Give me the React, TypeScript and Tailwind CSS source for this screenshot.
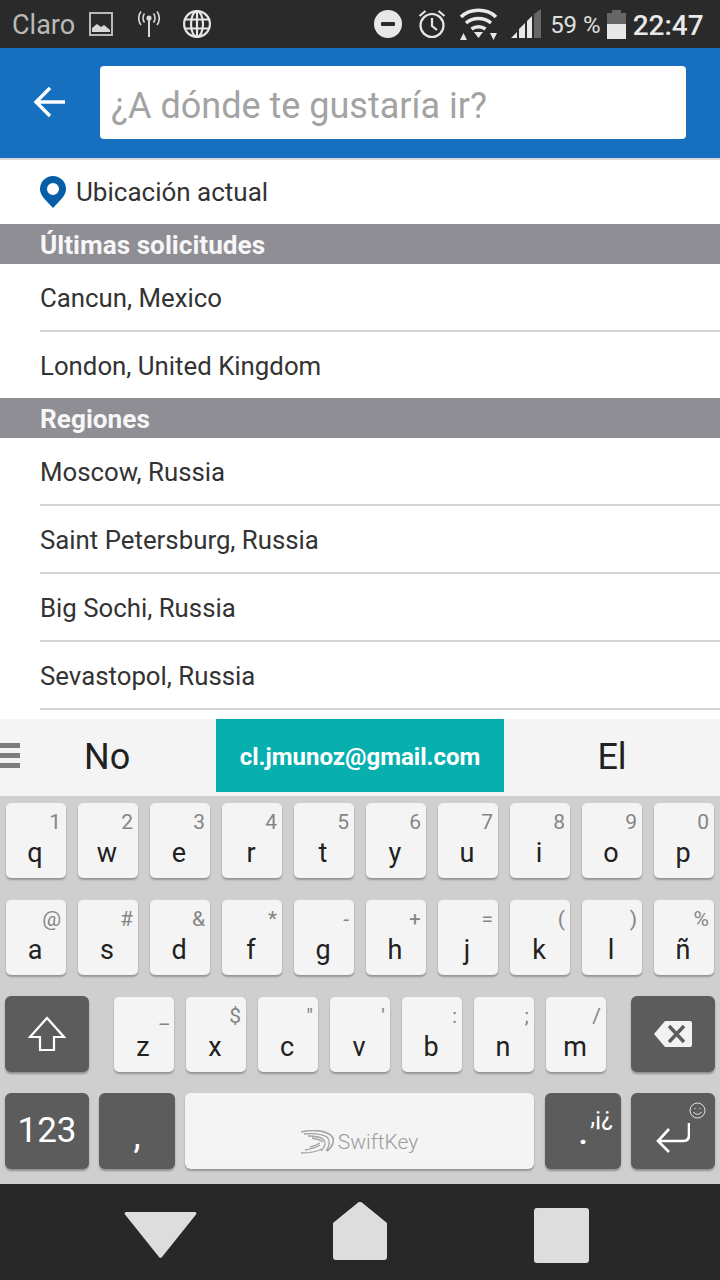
const font = { fontFamily: "Roboto, sans-serif" };

const TOP_ROW = [
  ["q", "1"], ["w", "2"], ["e", "3"], ["r", "4"], ["t", "5"],
  ["y", "6"], ["u", "7"], ["i", "8"], ["o", "9"], ["p", "0"],
];
const MIDDLE_ROW = [
  ["a", "@"], ["s", "#"], ["d", "&"], ["f", "*"], ["g", "-"],
  ["h", "+"], ["j", "="], ["k", "("], ["l", ")"], ["ñ", "%"],
];
const BOTTOM_ROW = [
  ["z", "_"], ["x", "$"], ["c", '"'], ["v", "'"], ["b", ":"], ["n", ";"], ["m", "/"],
];

function LetterKey({ label, hint }: { label: string; hint: string }) {
  return (
    <div className="relative flex h-[75px] w-[60px] shrink-0 items-end justify-center rounded-[5px] bg-[#f4f4f4] pb-[8px] pr-[2px] text-[27px] leading-[34px] text-[#212121] shadow-[0_2px_2px_rgba(0,0,0,0.28)]">
      {label}
      <span className="absolute right-[5px] top-[6px] text-[21px] leading-[26px] text-[#858585]">{hint}</span>
    </div>
  );
}

function DarkKey({ className, children }: { className: string; children: React.ReactNode }) {
  return (
    <div className={`relative flex h-[76px] shrink-0 items-center justify-center rounded-[6px] bg-[#5c5c5c] text-white shadow-[0_2px_2px_rgba(0,0,0,0.3)] ${className}`}>
      {children}
    </div>
  );
}

function Row({ label, last }: { label: string; last?: boolean }) {
  return (
    <div className="pl-[40px]">
      <div className={`flex items-center border-[#d6d6d6] pt-[3px] text-[25.800px] text-[#333333] ${last ? "h-[66px]" : "h-[68px] border-b-2"}`}>
        {label}
      </div>
    </div>
  );
}

function SectionHeader({ label }: { label: string }) {
  return (
    <div className="flex h-[40px] items-center bg-[#8f8e94] pl-[40px] pt-[3px] text-[26.200px] font-bold text-[#f7f7f7]">
      {label}
    </div>
  );
}

function StatusBar() {
  return (
    <div className="flex h-[48px] items-center bg-[#2a2a2a] text-[#e6e6e6]">
      <span className="ml-[12px] pt-[3px] text-[27px] text-[#b9b9b9]">Claro</span>
      <svg className="ml-[14px]" width="24" height="24" viewBox="0 0 24 24">
        <rect x="1" y="1" width="22" height="22" fill="none" stroke="#b9b9b9" strokeWidth="2" />
        <path d="M3 20v-4l5-4 4 3 3-2 6 5v2z" fill="#d8d8d8" />
      </svg>
      <svg className="ml-[25px]" width="22" height="28" viewBox="0 0 22 28" fill="none" stroke="#d8d8d8" strokeWidth="1.6">
        <circle cx="11" cy="8" r="2.6" fill="#d8d8d8" stroke="none" />
        <path d="M11 9v18" strokeWidth="2" />
        <path d="M6.5 3.5c-2 2.5-2 6.500 0 9M15.500 3.500c2 2.500 2 6.500 0 9M3 1.500c-3 4-3 9.500 0 13.500M19 1.500c3 4 3 9.500 0 13.500" />
      </svg>
      <svg className="ml-[23px]" width="28" height="28" viewBox="0 0 28 28" fill="none" stroke="#e6e6e6" strokeWidth="2.200">
        <circle cx="14" cy="14" r="12.900" />
        <ellipse cx="14" cy="14" rx="6" ry="12.900" />
        <path d="M14 1v26M2 9.500h24M2 18.500h24" />
      </svg>
      <svg className="ml-[163px]" width="28" height="28" viewBox="0 0 28 28">
        <circle cx="14" cy="14" r="14" fill="#e8e8e8" />
        <rect x="7" y="12" width="14" height="4" rx="1" fill="#2a2a2a" />
      </svg>
      <svg className="ml-[16px]" width="28" height="30" viewBox="0 0 28 30" fill="none" stroke="#e6e6e6" strokeWidth="2.200">
        <circle cx="14" cy="16.500" r="11.500" />
        <path d="M14 9v8l5 4M1.500 7l6-5M26.500 7l-6-5" />
      </svg>
      <svg className="ml-[13px]" width="39" height="34" viewBox="0 0 39 34" fill="none" stroke="#e8e8e8" strokeWidth="3.600">
        <path d="M2 10C11 1 28 1 37 10M7 16c7-6 18-6 25 0M12.500 22c4-3 10-3 14 0" />
        <path d="M15 25h9l-4.500 6zM1 33l3.500-7 3.500 7zM31 26h7l-3.500 7z" fill="#e8e8e8" stroke="none" />
      </svg>
      <svg className="ml-[13px]" width="31" height="30" viewBox="0 0 31 30">
        <path d="M0 29l6-6v6zM8 29v-9l6-6v15zM16 29V12l5-5v22z" fill="#e8e8e8" />
        <path d="M23 29V5l7-5v29z" fill="#666666" />
      </svg>
      <span className="ml-[8px] pt-[1px] text-[24px] text-[#e0e0e0]">59 %</span>
      <svg className="ml-[6px]" width="19" height="29" viewBox="0 0 19 29">
        <path d="M5 0h9v3h5v26H0V3h5z" fill="#666666" />
        <rect y="14" width="19" height="15" fill="#e8e8e8" />
      </svg>
      <span className="ml-[7px] pt-[3px] text-[28px] font-medium text-[#e8e8e8]">22:47</span>
    </div>
  );
}

function Header() {
  return (
    <div className="flex h-[112px] items-start border-b-2 border-[#d9d9d9] bg-[#1670bf]">
      <svg className="ml-[33px] mt-[38px]" width="33" height="32" viewBox="0 0 33 32" fill="none" stroke="white" strokeWidth="3.400">
        <path d="M32 16H3M17 2 3 16l14 14" />
      </svg>
      <div className="ml-[34px] mt-[18px] flex h-[73px] w-[586px] items-center rounded-[4px] bg-white pl-[11px] pt-[6px] text-[36px] text-[#a3a3a3]">
        ¿A dónde te gustaría ir?
      </div>
    </div>
  );
}

function SwiftKeyLogo() {
  return (
    <div className="flex items-center text-[21px] font-light text-[#9c9c9c]">
      <svg width="33" height="24" viewBox="0 0 33 24" fill="none" stroke="#a3a3a3" strokeWidth="1.300">
        <path d="M0 2c9-2 19-2 26 1 5 2 7 6 6 10-1 3-3 6-6 8" strokeWidth="1.600" />
        <path d="M3 4c9-1 18 0 23 3 3 3 3 8-1 14" />
        <path d="M7 6c7 0 13 1 16 4 2 3 1 7-3 11" />
        <path d="M11 8c5 1 9 2 11 4" />
        <path d="M0 23c8 0 15-1 21-4M4 20c6-1 11-2 15-5M9 17c4-1 7-2 10-4" />
      </svg>
      <span className="ml-[4px]">SwiftKey</span>
    </div>
  );
}

function Keyboard() {
  return (
    <div className="bg-[#cfcfcf]">
      <div className="flex h-[77px] items-start bg-[#f4f4f4]">
        <div className="flex h-[73px] w-[216px] items-center">
          <div className="flex w-[20px] flex-col gap-[5px]">
            <div className="h-[5px] bg-[#7d7d7d]" />
            <div className="h-[5px] bg-[#7d7d7d]" />
            <div className="h-[5px] bg-[#7d7d7d]" />
          </div>
          <span className="ml-[64px] pt-[3px] text-[36px] text-[#212121]">No</span>
        </div>
        <div className="flex h-[73px] w-[288px] items-center justify-center bg-[#08afaf] pt-[3px] text-[24px] font-bold text-white">
          cl.jmunoz@gmail.com
        </div>
        <div className="flex h-[73px] flex-1 items-center justify-center pt-[3px] text-[36px] text-[#212121]">El</div>
      </div>
      <div className="flex h-[388px] flex-col pl-[6px] pt-[7px]" >
        <div className="flex gap-[12px]">
          {TOP_ROW.map(([label, hint]) => <LetterKey key={label} label={label} hint={hint} />)}
        </div>
        <div className="mt-[22px] flex gap-[12px]">
          {MIDDLE_ROW.map(([label, hint]) => <LetterKey key={label} label={label} hint={hint} />)}
        </div>
        <div className="mt-[21px] flex items-center gap-[12px]">
          <DarkKey className="-ml-px mr-[13px] w-[84px]">
            <svg width="38" height="36" viewBox="0 0 38 36" fill="none" stroke="white" strokeWidth="2.200">
              <path d="M19 2 2 21h10v13h14V21h10z" />
            </svg>
          </DarkKey>
          {BOTTOM_ROW.map(([label, hint]) => <LetterKey key={label} label={label} hint={hint} />)}
          <DarkKey className="ml-[13px] w-[84px]">
            <svg width="38" height="26" viewBox="0 0 38 26">
              <path d="M11 0h25a2 2 0 0 1 2 2v22a2 2 0 0 1-2 2H11L0 13z" fill="#f2f2f2" />
              <path d="M15 5l15 16M30 5 15 21" stroke="#5c5c5c" strokeWidth="3.400" />
            </svg>
          </DarkKey>
        </div>
        <div className="-ml-px mt-[21px] flex gap-[10px]">
          <DarkKey className="w-[84px] text-[35px]">123</DarkKey>
          <DarkKey className="w-[76px] items-end pb-[15px] text-[36px] leading-[36px]">,</DarkKey>
          <div className="flex h-[76px] w-[349px] items-end justify-center rounded-[6px] bg-[#f4f4f4] pb-[11px] shadow-[0_2px_2px_rgba(0,0,0,0.28)]">
            <SwiftKeyLogo />
          </div>
          <DarkKey className="ml-px w-[76px]">
            <span className="mt-[6px] text-[30px] font-bold leading-none">.</span>
            <span className="absolute right-[8px] top-[9px] text-[25px] leading-[30px]">,¡¿</span>
          </DarkKey>
          <DarkKey className="w-[84px]">
            <svg className="mt-[14px]" width="34" height="30" viewBox="0 0 34 30" fill="none" stroke="white" strokeWidth="2.600">
              <path d="M33 0v12c0 4-2 6-6 6H3M13 6 2 18l11 11" />
            </svg>
            <svg className="absolute right-[9px] top-[9px]" width="17" height="17" viewBox="0 0 17 17" fill="none" stroke="#e6e6e6" strokeWidth="1">
              <circle cx="8.500" cy="8.500" r="7.500" />
              <path d="M4.500 10c1.500 3 6.500 3 8 0M6 6v1M11 6v1" />
            </svg>
          </DarkKey>
        </div>
      </div>
    </div>
  );
}

function NavBar() {
  return (
    <div className="flex h-[96px] items-start bg-[#282828]">
      <svg className="ml-[124px] mt-[28px]" width="73" height="46" viewBox="0 0 73 46">
        <path d="M2 0h69a1.500 1.500 0 0 1 1 2.500L38 45a2 2 0 0 1-3 0L1 2.500A1.500 1.500 0 0 1 2 0z" fill="#dddddd" />
      </svg>
      <svg className="ml-[136px] mt-[18px]" width="54" height="58" viewBox="0 0 54 58">
        <path d="M24.500 1a3.500 3.500 0 0 1 5 0L54 21v34a3 3 0 0 1-3 3H3a3 3 0 0 1-3-3V21z" fill="#dddddd" />
      </svg>
      <div className="ml-[147px] mt-[24px] h-[55px] w-[55px] rounded-[3px] bg-[#dddddd]" />
    </div>
  );
}

export default function App() {
  return (
    <div className="flex h-[1280px] w-[720px] flex-col overflow-hidden bg-white" style={font}>
      <StatusBar />
      <Header />
      <div className="flex h-[64px] items-center pl-[40px] text-[26px] text-[#333333]">
        <svg width="26" height="32" viewBox="0 0 26 32">
          <path fillRule="evenodd" d="M13 0a13 13 0 0 1 13 13c0 7-6 11-13 19C6 24 0 20 0 13A13 13 0 0 1 13 0zm0 7a6 6 0 1 0 0 12 6 6 0 0 0 0-12z" fill="#055ea6" />
        </svg>
        <span className="ml-[10px]">Ubicación actual</span>
      </div>
      <SectionHeader label="Últimas solicitudes" />
      <Row label="Cancun, Mexico" />
      <Row label="London, United Kingdom" last />
      <SectionHeader label="Regiones" />
      <Row label="Moscow, Russia" />
      <Row label="Saint Petersburg, Russia" />
      <Row label="Big Sochi, Russia" />
      <Row label="Sevastopol, Russia" />
      <div className="h-[9px]" />
      <Keyboard />
      <NavBar />
    </div>
  );
}
